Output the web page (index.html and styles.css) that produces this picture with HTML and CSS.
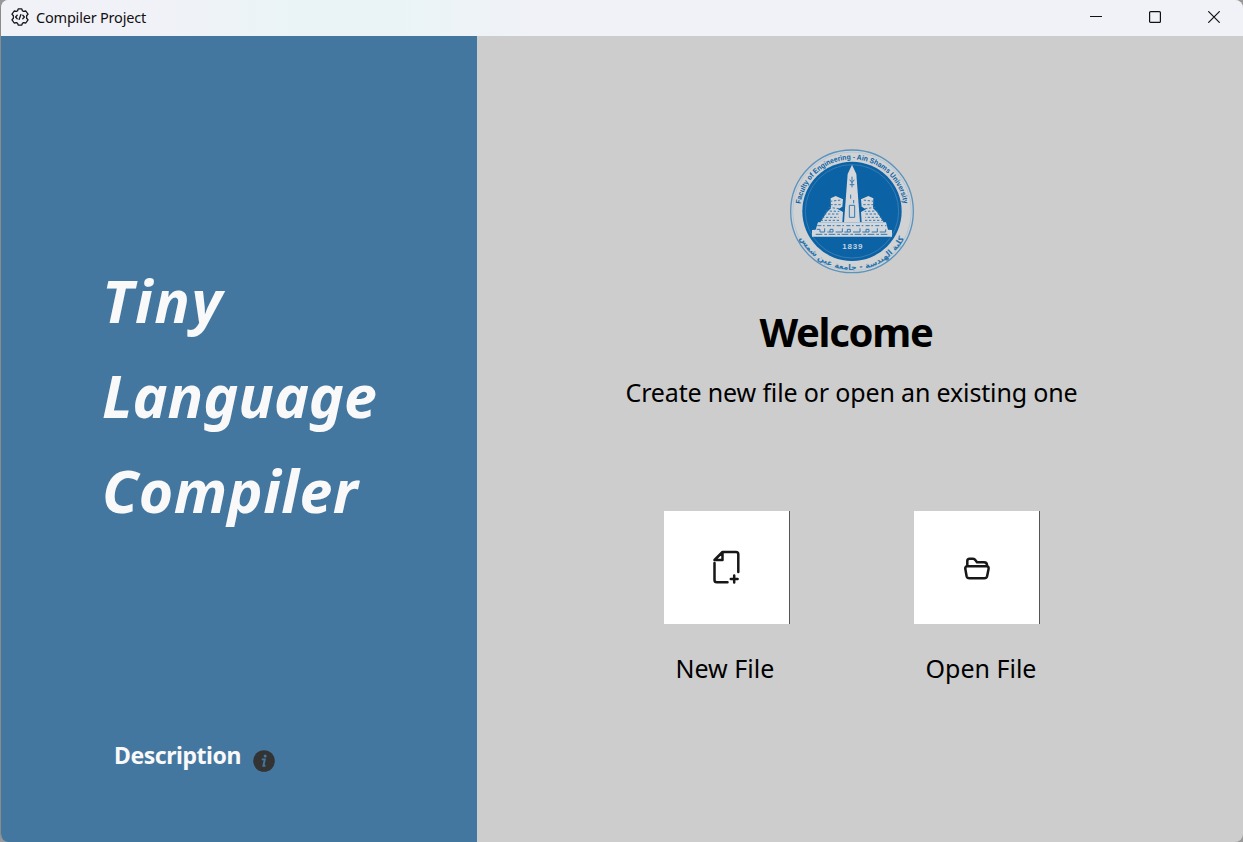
FILE: index.html
```html
<!DOCTYPE html>
<html lang="en">
<head>
<meta charset="utf-8">
<title>Compiler Project</title>
<link rel="stylesheet" href="styles.css">
</head>
<body>
<div class="window">
  <header class="titlebar">
    <svg class="app-icon" viewBox="0 0 18 18" fill="none" stroke="#15151c" stroke-width="1.3" stroke-linejoin="round" stroke-linecap="round">
      <path d="M6.600 2.700 7.200.9h3.600l.6 1.800 1.200.7 2.200-.4 2.200 3.200-1.400 1.500v2.600l1.400 1.500-2.200 3.200-2.200-.4-1.200.7-.6 1.800H7.200l-.6-1.800-1.200-.7-2.200.4L1 11.800l1.400-1.500V7.700L1 6.200 3.200 3l2.200.4z"/>
      <path d="M6.200 7.200 4.600 9l1.600 1.800M11.800 7.200 13.400 9l-1.600 1.800M9.900 6.600 8.100 11.400"/>
    </svg>
    <span class="app-name">Compiler Project</span>
    <div class="controls">
      <svg viewBox="0 0 12 12"><path d="M0 5.500h12"/></svg>
      <svg viewBox="0 0 12 12"><rect x=".6" y=".6" width="10.800" height="10.800" rx="1"/></svg>
      <svg viewBox="0 0 12 12"><path d="M.3.3l11.400 11.400M11.700.3.3 11.700"/></svg>
    </div>
  </header>
  <main class="content">
    <aside class="side">
      <h1 class="brand"><span class="l1">Tiny</span><span class="l2">Language</span><span class="l3">Compiler</span></h1>
      <div class="description">
        <span class="desc-text">Description</span>
        <svg class="info" viewBox="0 0 22 22"><circle cx="11" cy="11" r="10.800" fill="#333"/><circle cx="12.200" cy="6" r="1.500" fill="#4477a0"/><path d="M8.800 9.400h3l-1.400 6.300h2" fill="none" stroke="#4477a0" stroke-width="1.900"/></svg>
      </div>
    </aside>
    <section class="welcome">
      <svg class="logo" viewBox="0 0 420 420">
        <defs>
          <path id="arc-top" d="M54 208a156 156 0 0 1 312 0"/>
          <path id="arc-low" d="M34 208a176 176 0 0 0 352 0"/>
        </defs>
        <circle cx="210" cy="208" r="184" fill="#d0d2d4" stroke="#5b93bd" stroke-width="4"/>
        <circle cx="210" cy="208" r="178" fill="none" stroke="#a9c0d1" stroke-width="2"/>
        <circle cx="210" cy="208" r="149" fill="#0b62a5"/>
        <circle cx="210" cy="208" r="140" fill="none" stroke="#4b8abb" stroke-width="2"/>
        <text class="seal-en"><textPath href="#arc-top" startOffset="22" textLength="446" lengthAdjust="spacingAndGlyphs">Faculty of Engineering - Ain Shams University</textPath></text>
        <text class="seal-ar"><textPath href="#arc-low" startOffset="50%" text-anchor="middle">كلية الهندسة - جامعة عين شمس</textPath></text>
        <g fill="#d3d7db">
          <path d="m210 68-13 28-11 145h48L223 96z"/>
          <path d="m146 169 15-7 22 10-2 22-13 8 15 8-2 31h-66l20-31 12-11z"/>
          <path d="m274 169-15-7-22 10 2 22 13 8-15 8 2 31h66l-20-31-12-11z"/>
          <path d="M108 241h204l6 22 12 1v20H90v-20l11-1z"/>
        </g>
        <g fill="none" stroke="#3379af" stroke-width="3">
          <path d="M202 190h16v36h-16zM203 113l7 9 7-9M210 104v32M203 128h14M206 158v12M215 174v10"/>
          <path d="m144 178 33-4M145 188h31M140 196l31 4M131 207l41 1M126 216h45M120 226h50M116 235h56" stroke-dasharray="7 5"/>
          <path d="m276 178-33-4M275 188h-31M280 196l-31 4M289 207l-41 1M294 216h-45M300 226h-50M304 235h-56" stroke-dasharray="7 5"/>
          <path d="M106 251h207" stroke-dasharray="12 5 5 7"/>
          <path d="M104 262h10v8h14v-11m8 11h17v-8h-9v8m17 0h20v-11m6 11h18v-8h-9v8m17 0h21v-11m7 11h20v-8h-9v8m17 0h17v-11m7 11h18v-8"/>
          <path d="M101 277h217" stroke-dasharray="20 6 8 5"/>
        </g>
        <text class="seal-year" x="211" y="321" text-anchor="middle" textLength="61">1839</text>
      </svg>
      <h2 class="heading">Welcome</h2>
      <p class="subtitle">Create new file or open an existing one</p>
      <div class="actions">
        <div class="action">
          <button class="tile" aria-label="New File">
            <svg viewBox="0 0 126 113" fill="none" stroke="#171717" stroke-width="2.500" stroke-linecap="round" stroke-linejoin="round"><path d="M50.500 52v17q0 2.300 2.300 2.300H63.500M74.300 61V43.300q0-2.300-2.300-2.300H58.500l-8 8h8v-7.500M66.800 68h6.800M70.200 64.600v6.800"/></svg>
          </button>
          <span class="label new">New File</span>
        </div>
        <div class="action">
          <button class="tile" aria-label="Open File">
            <svg viewBox="0 0 126 113" fill="none" stroke="#171717" stroke-width="2.500" stroke-linecap="round" stroke-linejoin="round"><path d="M53.300 54.500v-4.500q0-2.300 2.300-2.300h3.400q1.500 0 2.500 1.500l1.500 2h7q3 0 3 3v.5" /><path d="M53.300 55.300h19.200q2.400 0 2.100 2.500l-1.500 7.500q-.5 2-2.700 2H55.300q-2.200 0-2.700-2l-1.300-7.500q-.3-2.500 2-2.500z"/></svg>
          </button>
          <span class="label open">Open File</span>
        </div>
      </div>
    </section>
  </main>
</div>
</body>
</html>
```
FILE: styles.css
```css
* { box-sizing: border-box; }
body { margin: 0; background: #999; font-family: "Noto Sans", "Open Sans", sans-serif; }
h1, h2, p { margin: 0; }
.window { width: 1243px; height: 842px; border-left: 1px solid #8b8b8b; border-radius: 8px; overflow: hidden; display: flex; flex-direction: column; background: #cdcdcd; }
.titlebar { height: 36px; flex: none; display: flex; align-items: center; padding: 0 23px 2px 10px; background: linear-gradient(90deg, #f1f2f8 12%, #eaf4f7 24%, #eaf4f7 32%, #f1f2f8 44%); }
.app-icon { width: 18px; height: 18px; }
.app-name { margin-left: 7px; font-size: 14.5px; line-height: 20px; letter-spacing: -0.2px; color: #111; white-space: nowrap; }
.controls { margin-left: auto; display: flex; gap: 46px 47px; }
.controls svg { width: 12px; height: 12px; fill: none; stroke: #111; stroke-width: 1.2; }
.content { flex: 1; display: flex; min-height: 0; }
.side { width: 476px; background: #4477a0; color: #f9f9f9; display: flex; flex-direction: column; padding: 217px 0 0 101px; }
.brand { font-size: 59px; line-height: 95px; font-weight: 700; font-style: italic; white-space: nowrap; }
.brand span { display: block; }
.l1 { letter-spacing: 1.6px; }
.l3 { letter-spacing: 0.5px; }
.description { display: flex; margin: 200px 0 0 12px; gap: 11px; align-items: flex-start; }
.desc-text { font-size: 23px; line-height: 34px; letter-spacing: -0.45px; font-weight: 700; white-space: nowrap; width: 128px; }
.info { width: 22px; height: 22px; margin-top: 12px; }
.welcome { flex: 1; display: flex; flex-direction: column; align-items: center; padding: 106px 17px 0 0; }
.logo { width: 140px; height: 140px; flex: none; }
.seal-en { font: bold 22px "Liberation Sans", sans-serif; fill: #0b62a5; }
.seal-ar { font: bold 24px "DejaVu Sans", sans-serif; fill: #2874ad; }
.seal-year { font: bold 24px "Liberation Sans", sans-serif; fill: #c3d4e2; }
.heading { font-size: 40px; line-height: 54px; letter-spacing: -1.3px; margin: 23px 11px 0 0; white-space: nowrap; }
.subtitle { font-size: 25px; line-height: 34px; letter-spacing: -0.15px; margin-top: 16px; white-space: nowrap; }
.actions { display: flex; gap: 124px; margin-top: 102px; }
.action { width: 126px; display: flex; flex-direction: column; align-items: flex-start; }
.tile { width: 126px; height: 113px; padding: 0; border: 0; border-right: 1px solid #555; background: #fff; display: block; }
.tile svg { display: block; width: 126px; height: 113px; }
.label { font-size: 25px; line-height: 34px; margin: 27px 0 0 12px; white-space: nowrap; }
```
